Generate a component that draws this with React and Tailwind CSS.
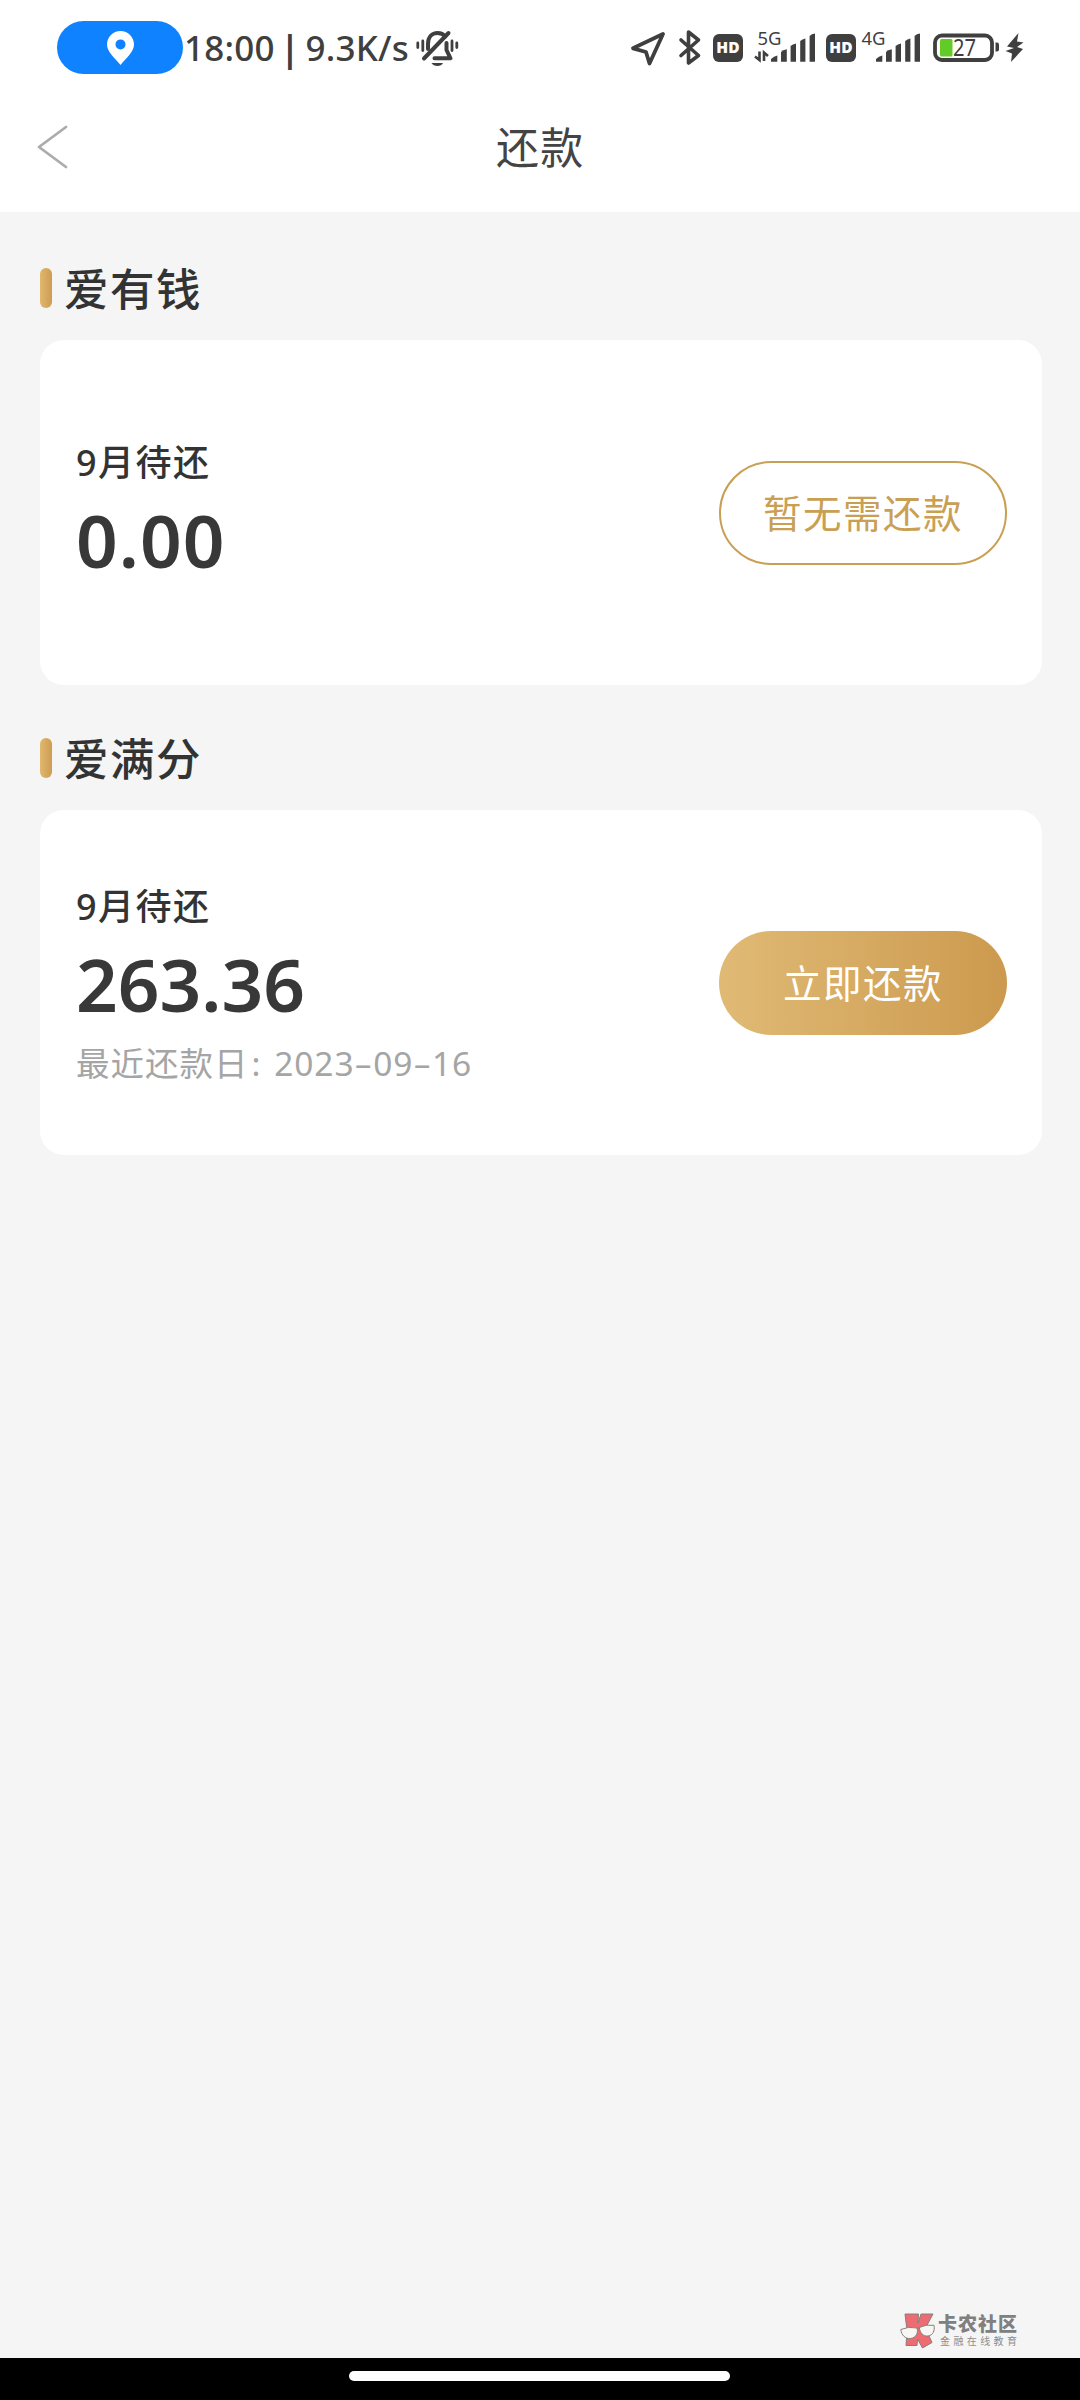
const INK = "#3f3f3f";

function LocationPill() {
  return (
    <div className="ml-[57px] flex h-[53px] w-[126px] items-center justify-center rounded-full bg-[#0f83ff]">
      <svg className="h-[34px] w-[27px]" viewBox="0 0 27 34">
        <path fillRule="evenodd" fill="#fff" d="M13.5 0C6 0 0 6 0 13.300c0 8 7.500 13.200 13.500 20.700C19.500 26.500 27 21.300 27 13.300 27 6 21 0 13.500 0Zm0 8.400a5 5 0 1 1 0 10 5 5 0 0 1 0-10Z" />
      </svg>
    </div>
  );
}

function MutedBell() {
  return (
    <svg className="h-[40px] w-[46px]" viewBox="414.500 28 46 40" fill="none" stroke={INK} strokeWidth="4" strokeLinecap="round">
      <path d="M418.300 43v4.500M423.300 41v9.500M452.500 41v9.500M457.300 43v4.500" strokeWidth="2.800" />
      <path d="M428.500 49V44c0-7 4-11 9.500-11 3.500 0 6 1.200 7.800 3.500" />
      <path d="M447 43v7l4 8.300H435" strokeLinejoin="round" />
      <path d="M424.500 58.500 449 33" />
      <path d="M432 63h11.500c-1.500 4-9.500 4-11.500 0Z" fill={INK} stroke="none" />
    </svg>
  );
}

function HdBadge() {
  return (
    <div className="flex h-[28px] w-[30px] items-center justify-center rounded-[6px] bg-[#3f3f3f] font-['Noto_Sans'] text-[15.500px] font-black leading-none text-white">
      HD
    </div>
  );
}

function Bars({ x }) {
  return (
    <g fill={INK} transform={`translate(${x} 0)`}>
      <path d="M0 61.800v-2.800q3-3 6.300-3.600v6.400Z" />
      <path d="M10 61.800V52q2-2 5.800-2.800v12.600Z" />
      <path d="M19.600 61.800V46q2-2 5.400-2.600v18.400Z" />
      <path d="M29.200 61.800V41q2-2 5.200-2.600v23.400Z" />
      <path d="M38.600 61.800V36q2-2 5.400-2.400v28.200Z" />
    </g>
  );
}

function StatusBar() {
  return (
    <div className="flex h-[95px] items-center">
      <LocationPill />
      <div className="flex w-[231px] items-center whitespace-nowrap font-['Noto_Sans'] text-[35px] font-medium leading-[48px] tracking-[0.200px] text-[#3f3f3f]">
        <span className="ml-px">18:00</span>
        <span className="w-[31px] text-center font-bold">|</span>
        <span>9.3K/s</span>
      </div>
      <MutedBell />
      <svg className="ml-[168px] h-[40px] w-[80px]" viewBox="628 28 80 40" fill="none" stroke={INK} strokeWidth="3.800" strokeLinejoin="round" strokeLinecap="round">
        <path d="M663 34 633 48.300 646 52 649.500 63.500Z" />
        <path d="M681 40 698.500 55.500 688.500 63V32L698.500 40 681 55.500" strokeWidth="3.600" />
      </svg>
      <div className="ml-[5px]"><HdBadge /></div>
      <svg className="ml-[9px] h-[48px] w-[66px]" viewBox="752 24 66 48">
        <text x="757.500" y="45" fontFamily="Noto Sans" fontSize="18.500" fill={INK}>5G</text>
        <path d="M759.500 51.500V60L755 56.500M764 61V52.500l4 3.500" fill="none" stroke={INK} strokeWidth="2.600" />
        <Bars x="771" />
      </svg>
      <div className="ml-[8px]"><HdBadge /></div>
      <svg className="ml-[4px] h-[48px] w-[66px]" viewBox="860 24 66 48">
        <text x="861.500" y="45" fontFamily="Noto Sans" fontSize="18.500" fill={INK}>4G</text>
        <Bars x="876" />
      </svg>
      <svg className="ml-[6px] h-[40px] w-[94px]" viewBox="932 28 94 40">
        <rect x="935" y="35.500" width="57" height="24.500" rx="7" fill="none" stroke={INK} strokeWidth="3.800" />
        <rect x="940" y="39" width="12.500" height="17.500" rx="1.500" fill="#62cb27" />
        <path d="M995.500 42.500h1.500q2 0 2 2v5q0 2-2 2h-1.500Z" fill={INK} />
        <text x="953" y="56" fontFamily="Noto Sans" fontSize="23" fill={INK} textLength="23" lengthAdjust="spacingAndGlyphs">27</text>
        <path d="M1018.500 33 1007 46.500 1014 48 1005.500 51 1012 53.500 1011 62 1023 49 1017 47 1023.500 42.500 1017 41.500Z" fill={INK} />
      </svg>
    </div>
  );
}

function Header() {
  return (
    <div className="flex h-[117px] items-start">
      <svg className="ml-[36px] mt-[29px] h-[45px] w-[34px]" viewBox="0 0 34 45" fill="none" stroke="#acacac" strokeWidth="2.800" strokeLinecap="round" strokeLinejoin="round">
        <path d="M30 3 3 23 30 43" />
      </svg>
      <h1 className="ml-[426px] mt-[23px] text-[43px] leading-[60px] tracking-[1.300px] text-[#444]">还款</h1>
    </div>
  );
}

function Section({ title, children }) {
  return (
    <section>
      <div className="flex h-[72px] items-start">
        <span className="h-[40px] w-[12px] rounded-full bg-linear-to-r from-[#e0b870] to-[#cd9c50]" />
        <h2 className="-mt-[9px] ml-[12px] text-[44.500px] font-medium leading-[60px] tracking-[1.500px] text-[#333]">{title}</h2>
      </div>
      <div className="flex h-[345px] w-[1002px] items-center justify-between rounded-[24px] bg-white pl-[36px] pr-[35px]">
        {children}
      </div>
    </section>
  );
}

function Dash() {
  return <span className="mx-[3.500px] inline-block scale-x-[1.700]">-</span>;
}

function Summary({ amount, className, children }) {
  return (
    <div className={className}>
      <div className="text-[36px] font-medium leading-[52px] tracking-[1.500px] text-[#333]">9月待还</div>
      <div className="mt-[11px] h-[80px] whitespace-nowrap text-[73px] font-semibold leading-[80px] text-[#383838]">{amount}</div>
      {children}
    </div>
  );
}

function Watermark() {
  return (
    <div className="ml-[900px] flex h-[36px] items-start">
      <svg className="h-[37px] w-[36px]" viewBox="0 0 36 37" strokeLinejoin="round">
        <path d="M5 2h13.500l-.5 9 3-9h12l-7.500 14L32 30.500 22.500 36l-5-9-.5 6.500H6l1-15Z" fill="#ee6b72" stroke="#858080" strokeWidth="1" />
        <g fill="#f8f5f5" stroke="#858080" strokeWidth="1">
          <path d="M.8 17.500Q8 14 17 16c1.500 5-1 10-6.500 10.500C5 27 1.500 23 .8 17.500Z" />
          <path d="M19.300 15.500Q26 12 34 13.300c1 5.500-1 10-6 10.700-5 .5-8-3-8.700-8.500Z" />
          <path d="M17 16.500q1-1 2.300-.5" fill="none" />
        </g>
      </svg>
      <div className="ml-[2px] whitespace-nowrap">
        <div className="mt-px text-[19px] font-black leading-[22px] tracking-[1px] text-[#808080]">卡农社区</div>
        <div className="ml-[2px] text-[10px] leading-[12px] tracking-[3.400px] text-[#8d8d8d]">金融在线教育</div>
      </div>
    </div>
  );
}

export default function App() {
  return (
    <div className="flex h-[2400px] w-[1080px] flex-col overflow-hidden bg-[#f5f5f5] font-['Noto_Sans','Noto_Sans_CJK_SC',sans-serif]">
      <header className="h-[212px] bg-white">
        <StatusBar />
        <Header />
      </header>
      <main className="flex flex-1 flex-col gap-[53px] pl-[40px] pt-[56px]">
        <Section title="爱有钱">
          <Summary className="pb-[9px]" amount={<span className="tracking-[1px]">0.00</span>} />
          <button className="h-[104px] w-[288px] rounded-full border-2 border-[#c9a053] pt-[2px] text-[38.500px] leading-none tracking-[1.500px] text-[#c9a053]">暂无需还款</button>
        </Section>
        <Section title="爱满分">
          <Summary className="pt-[3px]" amount="263.36">
            <div className="mt-[15px] whitespace-nowrap text-[33.500px] leading-[48px] tracking-[1px] text-[#a5a5a5]">
              最近还款日<span className="mx-[3px]">:</span> <span className="tracking-[0.900px]">2023<Dash />09<Dash />16</span>
            </div>
          </Summary>
          <button className="h-[104px] w-[288px] rounded-full bg-linear-to-r from-[#e0ba75] to-[#cc9a4e] pt-[2px] text-[38.500px] leading-none tracking-[1.500px] text-white">立即还款</button>
        </Section>
      </main>
      <Watermark />
      <div className="mt-[10px] h-[42px] shrink-0 bg-black pt-[13px]">
        <div className="ml-[349px] h-[10px] w-[381px] rounded-full bg-white" />
      </div>
    </div>
  );
}
